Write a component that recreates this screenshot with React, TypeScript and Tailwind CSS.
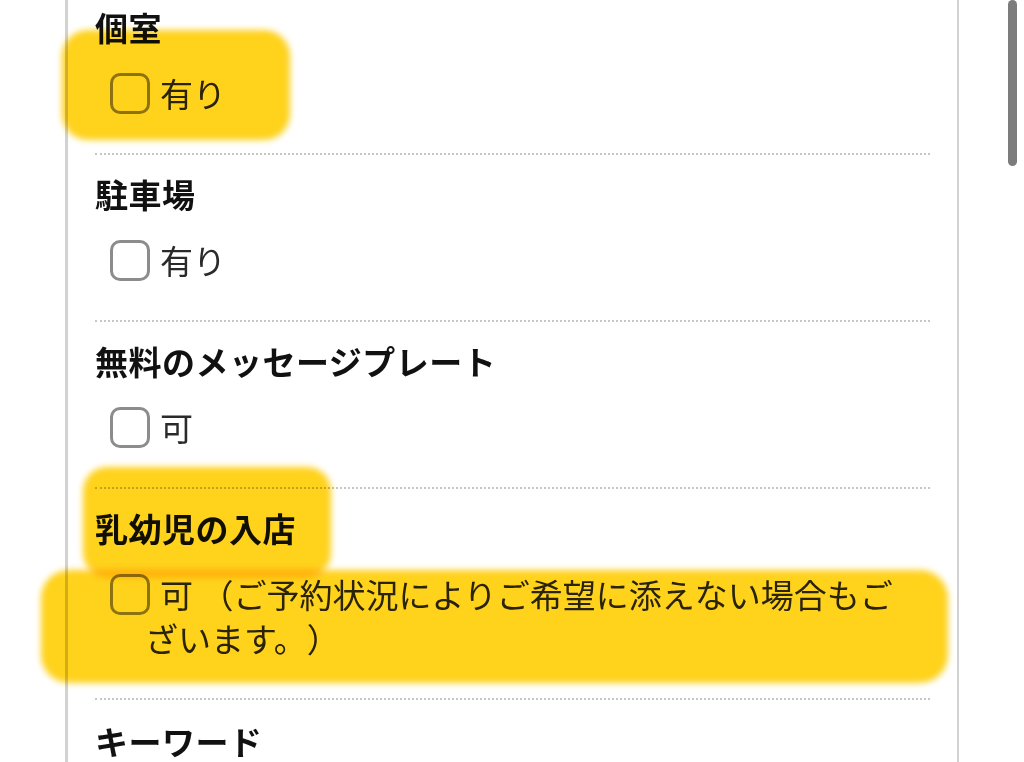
const sections = [
  { title: "個室", option: "有り" },
  { title: "駐車場", option: "有り" },
  { title: "無料のメッセージプレート", option: "可" },
  { title: "乳幼児の入店", option: "可 （ご予約状況によりご希望に添えない場合もございます。）" },
];

function Checkbox() {
  return (
    <span className="inline-block w-[40px] h-[41px] align-[-7px] mr-[10px] rounded-[10px] border-[3px] border-[#8c8c8c] bg-white" />
  );
}

export default function App() {
  return (
    <div
      className="relative w-[1024px] h-[762px] overflow-hidden bg-white text-[#111] [text-spacing-trim:space-all]"
      style={{ fontFamily: '"Noto Sans CJK JP", "Noto Sans", sans-serif' }}
    >
      <div className="ml-[65px] w-[894px] h-full flex flex-col border-l-[3px] border-r-2 border-[#d2d2d2] px-[27px]">
        {sections.map((s, i) => (
          <section
            key={s.title}
            className={
              i === 0
                ? "flex flex-col gap-[24px] pt-[7px] pb-[38px]"
                : "flex flex-col gap-[24px] pt-[19px] pb-[38px] border-t-2 border-dotted border-[#c6c6c6]"
            }
          >
            <h3 className="text-[33px] leading-[40px] tracking-[0.5px] font-bold text-[#111]">{s.title}</h3>
            <p className="pl-[50px] pr-[16px] -indent-[35px] text-[33px] leading-[44px] text-[#2a2a2a]">
              <Checkbox />
              {s.option}
            </p>
          </section>
        ))}
        <section className="pt-[21px] border-t-2 border-dotted border-[#c6c6c6]">
          <h3 className="text-[33px] leading-[40px] tracking-[0.5px] font-bold text-[#111]">キーワード</h3>
        </section>
      </div>

      {/* scrollbar */}
      <div className="absolute right-[7px] top-0 w-[9px] h-[166px] rounded-full bg-[#7c7c7c]" />

      {/* highlighter marks */}
      <div className="absolute left-[62px] top-[30px] w-[228px] h-[110px] rounded-[26px] bg-[#ffd21c] mix-blend-multiply blur-[3px]" />
      <div className="absolute left-[83px] top-[467px] w-[248px] h-[110px] rounded-[24px] bg-[#ffd21c] mix-blend-multiply blur-[3px]" />
      <div className="absolute left-[41px] top-[570px] w-[907px] h-[113px] rounded-[28px] bg-[#ffd21c] mix-blend-multiply blur-[3px]" />
    </div>
  );
}
